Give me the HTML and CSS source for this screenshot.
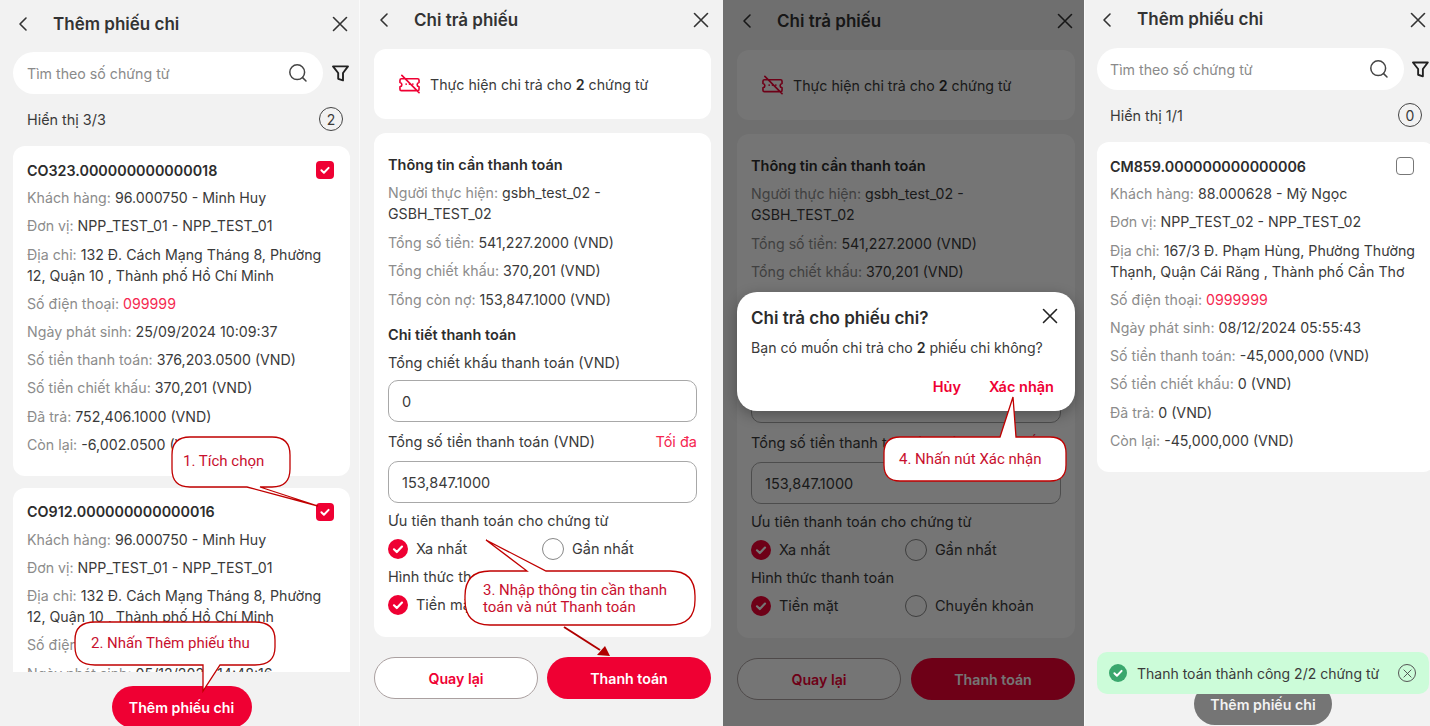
FILE: index.html
```html
<!DOCTYPE html>
<html lang="vi">
<head>
    <meta charset="UTF-8">
    <title>Thêm phiếu chi</title>
    <link rel="stylesheet" href="styles.css">
</head>
<body>
    <svg class="defs" width="0" height="0">
        <symbol id="i-back" viewBox="0 0 20 20"><path d="M13 4 7 10l6 6" fill="none" stroke="currentColor" stroke-width="1.6" stroke-linecap="round" stroke-linejoin="round"/></symbol>
        <symbol id="i-close" viewBox="0 0 20 20"><path d="M3.500 3.500l13 13M16.500 3.500l-13 13" fill="none" stroke="currentColor" stroke-width="1.6" stroke-linecap="round"/></symbol>
        <symbol id="i-search" viewBox="0 0 20 20"><circle cx="9.2" cy="9.2" r="7.4" fill="none" stroke="currentColor" stroke-width="1.5"/><path d="M14.6 14.6 18 18" fill="none" stroke="currentColor" stroke-width="1.5" stroke-linecap="round"/></symbol>
        <symbol id="i-filter" viewBox="0 0 19 19"><path d="M2 2.400H17L12 9V16.400L7.200 14.800V9Z" fill="none" stroke="currentColor" stroke-width="1.900" stroke-linejoin="round"/></symbol>
        <symbol id="i-tick" viewBox="0 0 20 20"><path d="M6 10.300 8.800 13 14 7.600" fill="none" stroke="#fff" stroke-width="2.200" stroke-linecap="round" stroke-linejoin="round"/></symbol>
        <symbol id="i-ticket" viewBox="0 0 22 20"><path d="M2.500 4.500H19.500C20.300 4.500 21 5.200 21 6V8.500C19.700 8.800 19 9.600 19 10.700S19.700 12.600 21 12.900V15.500C21 16.300 20.300 17 19.500 17H2.500C1.700 17 1 16.300 1 15.500V12.900C2.300 12.600 3 11.800 3 10.700S2.300 8.800 1 8.500V6C1 5.200 1.700 4.500 2.500 4.500ZM3 1 21 19" fill="none" stroke="currentColor" stroke-width="1.700" stroke-linecap="round" stroke-linejoin="round"/><path d="M7.500 10v.1M11 10v.1M14.500 10v.1" fill="none" stroke="currentColor" stroke-width="1.800" stroke-linecap="round"/></symbol>
    </svg>

    <main class="shots">
        <!-- buoc 1 + 2 -->
        <section class="phone phone-a">
            <header class="topbar">
                <svg class="ic"><use href="#i-back"/></svg>
                <h1>Thêm phiếu chi</h1>
                <svg class="ic"><use href="#i-close"/></svg>
            </header>
            <div class="search-row">
                <div class="search">
                    <span>Tìm theo số chứng từ</span>
                    <svg class="ic-search"><use href="#i-search"/></svg>
                </div>
                <svg class="ic-filter"><use href="#i-filter"/></svg>
            </div>
            <div class="summary">
                <span>Hiển thị 3/3</span>
                <span class="count">2</span>
            </div>
            <div class="list">
                <article class="card">
                    <div class="card-title">
                        <span>CO323.000000000000018</span>
                        <span class="check on"><svg><use href="#i-tick"/></svg></span>
                    </div>
                    <p><span class="lbl">Khách hàng:</span> 96.000750 - Minh Huy</p>
                    <p><span class="lbl">Đơn vị:</span> NPP_TEST_01 - NPP_TEST_01</p>
                    <p><span class="lbl">Địa chỉ:</span> 132 Đ. Cách Mạng Tháng 8, Phường 12, Quận 10 , Thành phố Hồ Chí Minh</p>
                    <p><span class="lbl">Số điện thoại:</span> <span class="red">099999</span></p>
                    <p><span class="lbl">Ngày phát sinh:</span> 25/09/2024 10:09:37</p>
                    <p><span class="lbl">Số tiền thanh toán:</span> 376,203.0500 (VND)</p>
                    <p><span class="lbl">Số tiền chiết khấu:</span> 370,201 (VND)</p>
                    <p><span class="lbl">Đã trả:</span> 752,406.1000 (VND)</p>
                    <p><span class="lbl">Còn lại:</span> -6,002.0500 (VND)</p>
                </article>
                <article class="card">
                    <div class="card-title">
                        <span>CO912.000000000000016</span>
                        <span class="check on"><svg><use href="#i-tick"/></svg></span>
                    </div>
                    <p><span class="lbl">Khách hàng:</span> 96.000750 - Minh Huy</p>
                    <p><span class="lbl">Đơn vị:</span> NPP_TEST_01 - NPP_TEST_01</p>
                    <p><span class="lbl">Địa chỉ:</span> 132 Đ. Cách Mạng Tháng 8, Phường 12, Quận 10 , Thành phố Hồ Chí Minh</p>
                    <p><span class="lbl">Số điện thoại:</span> <span class="red">099999</span></p>
                    <p><span class="lbl">Ngày phát sinh:</span> 05/12/2024 14:48:16</p>
                </article>
            </div>
            <footer class="bottom">
                <button class="btn-add">Thêm phiếu chi</button>
            </footer>
        </section>

        <!-- buoc 3 -->
        <section class="phone phone-b">
            <header class="topbar">
                <svg class="ic"><use href="#i-back"/></svg>
                <h1>Chi trả phiếu</h1>
                <svg class="ic"><use href="#i-close"/></svg>
            </header>
            <div class="info-card">
                <svg class="ic-ticket"><use href="#i-ticket"/></svg>
                <span>Thực hiện chi trả cho <b>2</b> chứng từ</span>
            </div>
            <div class="form-card">
                <h2>Thông tin cần thanh toán</h2>
                <p><span class="lbl">Người thực hiện:</span> gsbh_test_02 - GSBH_TEST_02</p>
                <p><span class="lbl">Tổng số tiền:</span> 541,227.2000 (VND)</p>
                <p><span class="lbl">Tổng chiết khấu:</span> 370,201 (VND)</p>
                <p><span class="lbl">Tổng còn nợ:</span> 153,847.1000 (VND)</p>
                <h2 class="section-two">Chi tiết thanh toán</h2>
                <label>Tổng chiết khấu thanh toán (VND)</label>
                <div class="field">0</div>
                <label class="label-max"><span>Tổng số tiền thanh toán (VND)</span><span class="red">Tối đa</span></label>
                <div class="field field-two">153,847.1000</div>
                <label>Ưu tiên thanh toán cho chứng từ</label>
                <div class="radios">
                    <span class="radio"><span class="dot on"><svg><use href="#i-tick"/></svg></span>Xa nhất</span>
                    <span class="radio"><span class="dot"></span>Gần nhất</span>
                </div>
                <label>Hình thức thanh toán</label>
                <div class="radios">
                    <span class="radio"><span class="dot on"><svg><use href="#i-tick"/></svg></span>Tiền mặt</span>
                    <span class="radio"><span class="dot"></span>Chuyển khoản</span>
                </div>
            </div>
            <footer class="actions">
                <button class="btn-ghost">Quay lại</button>
                <button class="btn-pay">Thanh toán</button>
            </footer>
        </section>

        <!-- buoc 4 -->
        <section class="phone phone-c">
            <header class="topbar">
                <svg class="ic"><use href="#i-back"/></svg>
                <h1>Chi trả phiếu</h1>
                <svg class="ic"><use href="#i-close"/></svg>
            </header>
            <div class="info-card">
                <svg class="ic-ticket"><use href="#i-ticket"/></svg>
                <span>Thực hiện chi trả cho <b>2</b> chứng từ</span>
            </div>
            <div class="form-card">
                <h2>Thông tin cần thanh toán</h2>
                <p><span class="lbl">Người thực hiện:</span> gsbh_test_02 - GSBH_TEST_02</p>
                <p><span class="lbl">Tổng số tiền:</span> 541,227.2000 (VND)</p>
                <p><span class="lbl">Tổng chiết khấu:</span> 370,201 (VND)</p>
                <p><span class="lbl">Tổng còn nợ:</span> 153,847.1000 (VND)</p>
                <h2 class="section-two">Chi tiết thanh toán</h2>
                <label>Tổng chiết khấu thanh toán (VND)</label>
                <div class="field">0</div>
                <label class="label-max"><span>Tổng số tiền thanh toán (VND)</span><span class="red">Tối đa</span></label>
                <div class="field field-two">153,847.1000</div>
                <label>Ưu tiên thanh toán cho chứng từ</label>
                <div class="radios">
                    <span class="radio"><span class="dot on"><svg><use href="#i-tick"/></svg></span>Xa nhất</span>
                    <span class="radio"><span class="dot"></span>Gần nhất</span>
                </div>
                <label>Hình thức thanh toán</label>
                <div class="radios">
                    <span class="radio"><span class="dot on"><svg><use href="#i-tick"/></svg></span>Tiền mặt</span>
                    <span class="radio"><span class="dot"></span>Chuyển khoản</span>
                </div>
            </div>
            <footer class="actions">
                <button class="btn-ghost">Quay lại</button>
                <button class="btn-pay">Thanh toán</button>
            </footer>
            <div class="dim"></div>
            <div class="dialog">
                <div class="dialog-head">
                    <h3>Chi trả cho phiếu chi?</h3>
                    <svg class="ic-dialog"><use href="#i-close"/></svg>
                </div>
                <p>Bạn có muốn chi trả cho <b>2</b> phiếu chi không?</p>
                <div class="dialog-actions">
                    <span>Hủy</span>
                    <span>Xác nhận</span>
                </div>
            </div>
        </section>

        <!-- ket qua -->
        <section class="phone phone-d">
            <header class="topbar">
                <svg class="ic"><use href="#i-back"/></svg>
                <h1>Thêm phiếu chi</h1>
                <svg class="ic"><use href="#i-close"/></svg>
            </header>
            <div class="search-row">
                <div class="search">
                    <span>Tìm theo số chứng từ</span>
                    <svg class="ic-search"><use href="#i-search"/></svg>
                </div>
                <svg class="ic-filter"><use href="#i-filter"/></svg>
            </div>
            <div class="summary">
                <span>Hiển thị 1/1</span>
                <span class="count">0</span>
            </div>
            <div class="list">
                <article class="card">
                    <div class="card-title">
                        <span>CM859.000000000000006</span>
                        <span class="check"></span>
                    </div>
                    <p><span class="lbl">Khách hàng:</span> 88.000628 - Mỹ Ngọc</p>
                    <p><span class="lbl">Đơn vị:</span> NPP_TEST_02 - NPP_TEST_02</p>
                    <p><span class="lbl">Địa chỉ:</span> 167/3 Đ. Phạm Hùng, Phường Thường Thạnh, Quận Cái Răng , Thành phố Cần Thơ</p>
                    <p><span class="lbl">Số điện thoại:</span> <span class="red">0999999</span></p>
                    <p><span class="lbl">Ngày phát sinh:</span> 08/12/2024 05:55:43</p>
                    <p><span class="lbl">Số tiền thanh toán:</span> -45,000,000 (VND)</p>
                    <p><span class="lbl">Số tiền chiết khấu:</span> 0 (VND)</p>
                    <p><span class="lbl">Đã trả:</span> 0 (VND)</p>
                    <p><span class="lbl">Còn lại:</span> -45,000,000 (VND)</p>
                </article>
            </div>
            <footer class="bottom">
                <button class="btn-add">Thêm phiếu chi</button>
            </footer>
            <div class="toast">
                <span class="toast-ok"><svg><use href="#i-tick"/></svg></span>
                <span class="toast-text">Thanh toán thành công 2/2 chứng từ</span>
                <span class="toast-x"><svg><use href="#i-close"/></svg></span>
            </div>
        </section>

        <!-- chu thich do ve len anh -->
        <svg class="notes" viewBox="0 0 1430 726">
            <path class="bubble" d="M190 437H272Q290 437 290 455V469Q290 487 272 487H260L318 506 247 487H190Q172 487 172 469V455Q172 437 190 437Z"/>
            <path class="bubble" d="M95 622H255Q275 622 275 640V647Q275 665 255 665H220L203 691 203 665H95Q75 665 75 647V640Q75 622 95 622Z"/>
            <path class="bubble" d="M490 571H527L486 540 546 571H670Q695 571 695 596V600Q695 625 670 625H490Q465 625 465 600V596Q465 571 490 571Z"/>
            <path class="arrow" d="M564 627 600 650"/>
            <path class="arrow-head" d="M610 656 597 655 605 646Z"/>
            <path class="bubble" d="M900 437H1000L1013 397 1016 437H1050Q1066 437 1066 453V465Q1066 481 1050 481H900Q884 481 884 465V453Q884 437 900 437Z"/>
        </svg>
        <span class="note note-1">1. Tích chọn</span>
        <span class="note note-2">2. Nhấn Thêm phiếu thu</span>
        <span class="note note-3">3. Nhập thông tin cần thanh<br>toán và nút Thanh toán</span>
        <span class="note note-4">4. Nhấn nút Xác nhận</span>
    </main>
</body>
</html>
```

FILE: styles.css
```css
* {
    box-sizing: border-box;
}
body {
    margin: 0;
    font-family: Inter, "Noto Sans", sans-serif;
    font-size: 14.2px;
    line-height: 21px;
    color: #3a3a3a;
    background-color: #f2f2f2;
}
.defs {
    display: block;
}
.shots {
    position: relative;
    display: flex;
    width: 1430px;
    height: 726px;
    overflow: hidden;
}
.phone {
    position: relative;
    display: flex;
    flex-direction: column;
    flex: none;
    height: 726px;
    overflow: hidden;
    background-color: #f2f2f2;
}
.phone-a {
    width: 360px;
    padding: 4px 9px 0 13px;
    border-right: 1px solid #fafafa;
}
.phone-b {
    width: 363px;
    padding: 0 12px 0 14px;
}
.phone-c {
    width: 361px;
    padding: 1px 9px 0 14px;
}
.phone-d {
    width: 346px;
    padding: 0 0 0 12px;
    border-left: 1px solid #fafafa;
}

/* top bar */
.topbar {
    display: flex;
    align-items: center;
    flex: none;
    height: 40px;
    color: #333;
}
.phone-d .topbar {
    padding: 0 2px 1px 0;
}
.topbar h1 {
    margin: 0 0 0 20px;
    font-size: 17px;
    font-weight: 600;
    flex: 1;
}
.ic {
    width: 20px;
    height: 20px;
    flex: none;
}

/* search */
.search-row {
    display: flex;
    align-items: center;
    gap: 8px;
    flex: none;
    margin-top: 8px;
}
.phone-d .search-row {
    gap: 7px;
}
.search {
    display: flex;
    align-items: center;
    justify-content: space-between;
    width: 310px;
    height: 42px;
    padding: 0 15px 0 14px;
    border-radius: 21px;
    background-color: #fff;
    color: #8a8a8a;
}
.phone-d .search {
    padding-left: 13px;
}
.ic-search {
    width: 20px;
    height: 20px;
    color: #444;
}
.ic-filter {
    width: 19px;
    height: 19px;
    color: #222;
}
.summary {
    display: flex;
    align-items: center;
    justify-content: space-between;
    flex: none;
    height: 24px;
    margin: 13px 7px 15px 14px;
    font-size: 14.4px;
}
.phone-d .summary {
    width: 312px;
    margin-left: 13px;
    margin-right: 0;
}
.count {
    display: flex;
    align-items: center;
    justify-content: center;
    width: 24px;
    height: 24px;
    border: 1.300px solid #444;
    border-radius: 50%;
    font-size: 14px;
}

/* cards */
.list {
    flex: 1;
    min-height: 0;
    overflow: hidden;
}
.card {
    margin-bottom: 12px;
    padding: 14px 16px 21px 14px;
    border-radius: 12px;
    background-color: #fff;
}
.phone-d .card {
    width: 338px;
    padding-left: 13px;
}
.card-title {
    display: flex;
    align-items: center;
    justify-content: space-between;
    height: 20px;
    font-size: 14.300px;
    font-weight: 600;
    color: #2c2c2c;
}
.card p,
.form-card p {
    margin: 7.2px 0 0;
}
.form-card p {
    margin-top: 7.400px;
}
.lbl {
    color: #8c8c8c;
}
.red {
    color: #f5274f;
}
.check {
    width: 18px;
    height: 18px;
    flex: none;
    border: 1.600px solid #777;
    border-radius: 4px;
}
.phone-d .check {
    margin-right: 5px;
}
.check.on {
    border: none;
    background-color: #ef0033;
}
.check svg {
    display: block;
    width: 18px;
    height: 18px;
}
.bottom {
    display: flex;
    justify-content: center;
    flex: none;
    height: 54px;
    padding-top: 14px;
}
.phone-d .bottom {
    width: 332px;
    padding-top: 11px;
}
button {
    font-family: inherit;
    font-size: 14.200px;
    font-weight: 600;
    border-radius: 21px;
}
.btn-add {
    width: 140px;
    height: 42px;
    flex: none;
    border: none;
    background-color: #ef0033;
    color: #fff;
}
.phone-d .btn-add {
    width: 138px;
    background-color: #757575;
    color: #f2f2f2;
}

/* form */
.info-card {
    display: flex;
    align-items: center;
    gap: 10px;
    flex: none;
    height: 70px;
    margin-top: 9px;
    padding-left: 25px;
    border-radius: 12px;
    background-color: #fff;
}
.ic-ticket {
    width: 21px;
    height: 20px;
    color: #ef0033;
}
.info-card b,
.dialog b {
    font-weight: 600;
    color: #2c2c2c;
}
.form-card {
    flex: none;
    display: flex;
    flex-direction: column;
    height: 504px;
    margin-top: 14px;
    padding: 21px 14px 0;
    border-radius: 12px;
    background-color: #fff;
}
.form-card h2 {
    margin: 0;
    font-size: 14.500px;
    line-height: 21px;
    font-weight: 600;
    color: #2c2c2c;
}
.form-card .section-two {
    margin-top: 14.500px;
}
.form-card label {
    display: block;
    margin-top: 7px;
    font-size: 14.500px;
}
.label-max {
    display: flex !important;
    justify-content: space-between;
}
.field {
    display: flex;
    align-items: center;
    height: 42px;
    margin-top: 7px;
    padding-left: 13px;
    border: 1.300px solid #a8a8a8;
    border-radius: 10px;
    font-size: 14.500px;
}
.field-two {
    margin-top: 9px;
}
.form-card .field + label {
    margin-top: 9px;
}
.form-card .field-two + label {
    margin-top: 7px;
}
.radios {
    display: grid;
    grid-template-columns: 154px 1fr;
    margin-top: 7px;
    font-size: 14.500px;
}
.radio {
    display: flex;
    align-items: center;
    gap: 8px;
    height: 21px;
}
.dot {
    display: block;
    width: 20px;
    height: 20px;
    border-radius: 50%;
    background-color: #ef0033;
}
.dot:not(.on) {
    width: 22px;
    height: 22px;
    border: 1.300px solid #888;
    background-color: transparent;
}
.dot svg {
    display: block;
    width: 20px;
    height: 20px;
}
.actions {
    display: flex;
    justify-content: space-between;
    flex: none;
    margin-top: 20px;
}
.actions button {
    width: 164px;
    height: 42px;
}
.btn-ghost {
    border: 1.300px solid #aaa0a0;
    background-color: #fff;
    color: #ef0033;
}
.btn-pay {
    border: none;
    background-color: #ef0033;
    color: #fff;
}

/* dim + dialog */
.dim {
    position: absolute;
    inset: 0;
    background-color: rgba(0, 0, 0, .54);
}
.dialog {
    position: absolute;
    left: 14px;
    top: 292px;
    width: 338px;
    height: 119px;
    padding: 15px 14px 0;
    border-radius: 20px;
    background-color: #fff;
    box-shadow: 0 4px 14px rgba(0, 0, 0, .3);
}
.dialog-head {
    display: flex;
    align-items: center;
    justify-content: space-between;
}
.dialog h3 {
    margin: 0;
    font-size: 17px;
    line-height: 22px;
    font-weight: 600;
    color: #2c2c2c;
}
.ic-dialog {
    width: 20px;
    height: 20px;
    margin-top: -4px;
    margin-right: 1px;
    color: #222;
}
.dialog p {
    margin: 8px 0 0;
    font-size: 14.100px;
}
.dialog-actions {
    display: flex;
    justify-content: flex-end;
    gap: 28px;
    margin-top: 18px;
    padding-right: 7px;
    font-size: 14.500px;
    font-weight: 600;
    color: #ef0033;
}

/* toast */
.toast {
    position: absolute;
    left: 12px;
    top: 652px;
    display: flex;
    align-items: center;
    width: 332px;
    height: 42px;
    padding: 0 13px 0 12px;
    border-radius: 10px;
    background-color: #ccfcd9;
    font-size: 14px;
}
.toast-ok {
    width: 18px;
    height: 18px;
    flex: none;
    border-radius: 50%;
    background-color: #3aa76d;
}
.toast-ok svg {
    display: block;
    width: 18px;
    height: 18px;
}
.toast-text {
    flex: 1;
    margin-left: 10px;
}
.toast-x {
    display: flex;
    width: 18px;
    height: 18px;
    padding: 2.500px;
    border: 1.700px solid #555;
    border-radius: 50%;
    color: #444;
}
.toast-x svg {
    width: 100%;
    height: 100%;
}

/* callouts */
.notes {
    position: absolute;
    inset: 0;
    width: 1430px;
    height: 726px;
}
.bubble {
    fill: #fff;
    stroke: #c00000;
    stroke-width: 1.300;
}
.arrow {
    fill: none;
    stroke: #b00000;
    stroke-width: 2;
}
.arrow-head {
    fill: #b00000;
}
.note {
    position: absolute;
    font-family: Roboto, "Liberation Sans", sans-serif;
    font-size: 15px;
    line-height: 17px;
    color: #c8102e;
    white-space: nowrap;
}
.note-1 {
    left: 183px;
    top: 453px;
}
.note-2 {
    left: 91px;
    top: 635px;
}
.note-3 {
    left: 483px;
    top: 582px;
}
.note-4 {
    left: 899px;
    top: 451px;
}
```
